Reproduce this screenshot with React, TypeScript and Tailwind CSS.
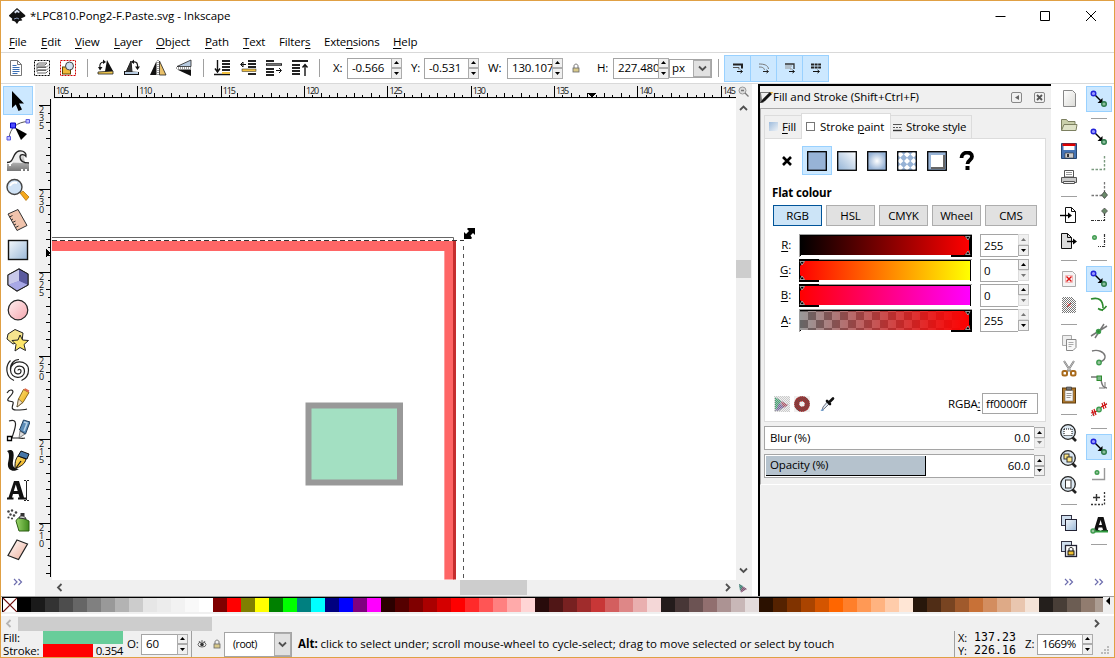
import React from "react";

type Kids = { children?: React.ReactNode };

/* ---------- small controls ---------- */

function Icon({ s = 20, v = 20, children }: Kids & { s?: number; v?: number }) {
  return (
    <svg width={s} height={s} viewBox={`0 0 ${v} ${v}`} fill="none" className="shrink-0">
      {children}
    </svg>
  );
}

function Spin({ upOff = false, downOff = false }: { upOff?: boolean; downOff?: boolean }) {
  return (
    <div className="flex h-full w-[11px] shrink-0 flex-col">
      <div className={`flex flex-1 items-center justify-center border bg-[#f0f0f0] ${upOff ? "border-[#dcdcdc]" : "border-[#acacac]"}`}>
        <svg width="5" height="3" viewBox="0 0 5 3"><path d="M0 3 2.5 0 5 3z" fill={upOff ? "#777" : "#000"} /></svg>
      </div>
      <div className={`flex flex-1 items-center justify-center border bg-[#f0f0f0] ${downOff ? "border-[#dcdcdc]" : "border-[#acacac]"}`}>
        <svg width="5" height="3" viewBox="0 0 5 3"><path d="M0 0 2.5 3 5 0z" fill={downOff ? "#777" : "#000"} /></svg>
      </div>
    </div>
  );
}

function NumBox({ value, box }: { value: string; box: string }) {
  return (
    <div className={`flex shrink-0 ${box}`}>
      <div className="flex min-w-0 flex-1 items-center overflow-hidden border border-r-0 border-[#a5a5a5] bg-white pl-[4px] whitespace-nowrap">{value}</div>
      <Spin />
    </div>
  );
}

function Chevron({ d, c = "#505050" }: { d: "l" | "r" | "u" | "d"; c?: string }) {
  const p = { l: "M5.5 1 2 4.5 5.5 8", r: "M3 1l3.5 3.5L3 8", u: "M1 6l3.500-3.500L8 6", d: "M1 2.500 4.500 6 8 2.500" }[d];
  return (
    <svg width="9" height="9" viewBox="0 0 9 9"><path d={p} stroke={c} strokeWidth="1.800" fill="none" /></svg>
  );
}

function More() {
  return (
    <svg width="10" height="8" viewBox="0 0 10 8" fill="none" stroke="#6d6dae" strokeWidth="1.200"><path d="M1 1l3 3-3 3M5.500 1l3 3-3 3" /></svg>
  );
}

const VSep = () => <div className="flex h-full w-3 shrink-0 items-center justify-center"><div className="h-[18px] w-px bg-[#a0a0a0]" /></div>;
const HSep = () => <div className="flex h-3 w-full shrink-0 items-center justify-center"><div className="h-px w-4 bg-[#a0a0a0]" /></div>;

/* ---------- shared paint ---------- */

function Defs() {
  return (
    <svg width="0" height="0" className="absolute">
      <defs>
        <linearGradient id="blue" x1="0" y1="1" x2="1" y2="0"><stop stopColor="#93b3d6" /><stop offset="1" stopColor="#fff" /></linearGradient>
        <linearGradient id="sky" x1="0" y1="0" x2="1" y2="1"><stop stopColor="#f4f8fc" /><stop offset="1" stopColor="#9ab8d8" /></linearGradient>
        <linearGradient id="mist" x1="0" y1="0" x2="1" y2="1"><stop stopColor="#9dbbdc" /><stop offset="1" stopColor="#eef2f6" /></linearGradient>
        <radialGradient id="glow"><stop stopColor="#fff" /><stop offset="1" stopColor="#97b3d6" /></radialGradient>
        <linearGradient id="pink" x1="0" y1="0" x2="1" y2="1"><stop stopColor="#fff0f0" /><stop offset="1" stopColor="#f5a6ae" /></linearGradient>
        <linearGradient id="peach" x1="0" y1="0" x2="1" y2="1"><stop stopColor="#fff" /><stop offset="1" stopColor="#efae9a" /></linearGradient>
        <linearGradient id="grey" x1="0" y1="0" x2="0" y2="1"><stop stopColor="#eee" /><stop offset="1" stopColor="#777" /></linearGradient>
        <linearGradient id="paper" x1="0" y1="0" x2="1" y2="1"><stop stopColor="#fff" /><stop offset="1" stopColor="#dcdcd8" /></linearGradient>
        <linearGradient id="gold" x1="0" y1="0" x2="1" y2="1"><stop stopColor="#ffe680" /><stop offset="1" stopColor="#e8a000" /></linearGradient>
        <linearGradient id="green" x1="0" y1="0" x2="1" y2="0"><stop stopColor="#9bd66a" /><stop offset="1" stopColor="#3f8a1c" /></linearGradient>
        <pattern id="mesh" width="2" height="2" patternUnits="userSpaceOnUse"><path d="M0 0h1v1H0zM1 1h1v1H1z" fill="#555" /></pattern>
        <pattern id="veil" width="2" height="2" patternUnits="userSpaceOnUse"><path d="M0 0h1v1H0zM1 1h1v1H1z" fill="#f0f0f0" /></pattern>
      </defs>
    </svg>
  );
}

/* ---------- tool palette on the left ---------- */

const tools: React.ReactNode[] = [
  <Icon s={24} v={24}><path d="M6 2v17l3.800-3.400L12.500 22l3.500-1.600-2.900-6H18z" fill="#000" /></Icon>,
  <Icon s={24} v={24}><path d="M3 20C4 10 11 4 22 3.500" stroke="#555" /><path d="M1 18.500h3.500V22H1zM20 1.500h3.500V5H20z" fill="#bcbcff" stroke="#5a5adf" /><path d="M4.500 5h5v5h-5z" fill="#4b4bff" stroke="#0000c8" /><path d="M9 9.500 21 16l-6 6z" fill="#000" /></Icon>,
  <Icon s={24} v={24}><path d="M1 23v-7h2v2h2v-2c3 0 3-8 6-11h8c-2 8 0 11 4 11v7h-2v-2h-2v2h-2v-2h-2v2z" fill="url(#grey)" /><path d="M1 14.500c8 0 5-10 12-11.500 5-1 8 3 7 5.500-1.500-2.500-6-2.500-6 .5 0 4 4 6 9 6" stroke="#222" strokeWidth="1.300" fill="#eee" /></Icon>,
  <Icon s={24} v={24}><path d="M14 15l3-2 6 6-3 3.500z" fill="#f5a81c" stroke="#a86800" strokeWidth=".7" /><circle cx="8.500" cy="9" r="7.500" fill="#cfe2f5" stroke="#444" strokeWidth="1.400" /><path d="M4 8c1-3 4-4 7-3" stroke="#fff" strokeWidth="2" /></Icon>,
  <Icon s={24} v={24}><path d="M2 6 12 1.500l9 16-10 5z" fill="#f0c3ac" stroke="#333" /><path d="M3.500 9l3-1.500M5 12l2-1M6.500 14.500l3-1.500M8 17l2-1M9.500 19.500l3-1.500" stroke="#333" /></Icon>,
  <Icon s={24} v={24}><rect x="2.500" y="2.500" width="19" height="19" fill="url(#sky)" stroke="#111" strokeWidth="1.400" /></Icon>,
  <Icon s={24} v={24}><path d="M2 7 13 1l9 5v11l-11 6-9-6z" fill="#8d8dcc" stroke="#222" strokeWidth="1.100" /><path d="M2 7l11-6v12L2 17z" fill="#c8c8ea" /><path d="M13 1l9 5v11l-9-4z" fill="#5b5b9e" /><path d="M2 17l11-4 9 4-11 6z" fill="#a8a8e6" /><path d="M2 7 13 1l9 5v11l-11 6-9-6z" stroke="#222" /></Icon>,
  <Icon s={24} v={24}><circle cx="12" cy="12" r="9.800" fill="url(#pink)" stroke="#222" strokeWidth="1.200" /></Icon>,
  <Icon s={24} v={24}><path d="M2 6l7-4.500L17 5l-1 8-9 3-6-5z" fill="#f6e58e" stroke="#222" /><path d="M14 7l2.500 5 6 .5-4.500 4 1.500 6-5.500-3-5 3.500 1-6.500-4-4 6-.5z" fill="#fde66a" stroke="#222" /></Icon>,
  <Icon s={24} v={24}><path d="M12 12.500c0-2 3.500-1.500 3 1-.7 3.700-6.500 3-6.500-1 0-6 10-6 10 .8 0 8.700-14 8-14-1.300C4.500 1.500 22.500 1 22.500 12c0 5-2.500 8.500-7 10.500M4.500 12C4 6 8 1.500 13 1.500" stroke="#222" strokeWidth="1.200" /><path d="M4.500 2.500C-1 8-.5 19 8 22.500" stroke="#222" strokeWidth="1.200" /></Icon>,
  <Icon s={24} v={24}><path d="M1 5c3-5 8-3 5 1s-6 6-3 7 5 0 4 3-2 6 3 6 8 0 11-1" stroke="#222" strokeWidth="1.200" /><path d="M11 19l1.500-8 5-9.500 5.500 3-6 10z" fill="url(#gold)" stroke="#6b4a00" strokeWidth=".8" /><path d="M17.500 1.500l5 3 .8-2-4-2.300z" fill="#e06a4a" /><path d="M12.500 11l4 3.500L11 19z" fill="#f6e3c5" stroke="#222" strokeWidth=".5" /></Icon>,
  <Icon s={24} v={24}><path d="M3 3c12-4 4 12 3 17h6c3 0 4 1 7 0" stroke="#222" strokeWidth="1.200" /><path d="M1.500 18.500h4v4h-4z" fill="#fff" stroke="#000" strokeWidth="1.300" /><path d="M13 20l1-7 5 3z" fill="#ddd" stroke="#333" strokeWidth=".6" /><path d="M13.500 12l4-10 6.500 2-4.500 12z" fill="#5b8cb8" stroke="#24415e" /><path d="M18 4l3 1-3 8" stroke="#b9d4ea" strokeWidth="1.500" /></Icon>,
  <Icon s={24} v={24}><path d="M1 3c8-4 7 5 6 10-1 6 2 8 6 8-6 4-12 1-11-6 1-5 2-10-1-12z" fill="#111" /><path d="M9 21c0-6 0-9 3-13l8 3c-1 5-5 7-9 9z" fill="url(#gold)" stroke="#111" /><path d="M12 8l3-5 8 3-2 5z" fill="#4676a8" stroke="#111" /><path d="M10 20l5-7" stroke="#111" strokeWidth="1.200" /></Icon>,
  <Icon s={24} v={24}><path d="M1 21.500v-2h1.500L8 3h5l5 16.500h2v2h-8v-2h1.500l-1-3.500H7l-1 3.500h1.500v2zM7.800 13h3.900L9.800 6.500z" fill="#111" /><path d="M18 2.500h2M21 2.500h2M20.500 3v19M18 22.500h2M21 22.500h2" stroke="#222" /></Icon>,
  <Icon s={24} v={24}><path d="M10 13c1-3 4-4 7-3l6 3v10H13z" fill="url(#green)" stroke="#2b5c12" /><path d="M13 10c0-3 6-3 7 1z" fill="#ccc" stroke="#333" /><path d="M14.500 5h4v3h-4z" fill="#333" /><g fill="#444"><circle cx="2.500" cy="3.500" r="1.300" /><circle cx="6" cy="2.500" r="1.200" /><circle cx="10" cy="4.500" r="1.300" /><circle cx="4.500" cy="6.500" r="1.200" /><circle cx="8" cy="7.500" r="1.300" /><circle cx="2.500" cy="9.500" r="1.100" /><circle cx="6" cy="10.500" r="1.100" /></g></Icon>,
  <Icon s={24} v={24}><path d="M11 2l10.500 4-9 15.500-10.500-4z" fill="url(#peach)" stroke="#222" strokeWidth="1.200" /></Icon>,
];

function Toolbox() {
  return (
    <div className="flex w-[34px] shrink-0 flex-col items-center bg-white pt-[2px]">
      {tools.map((t, i) => (
        <div key={i} className={`flex w-[30px] shrink-0 items-center justify-center ${i === 0 ? "h-[29px] border border-[#99d1ff] bg-[#cce8ff]" : "h-[30px]"}`}>{t}</div>
      ))}
      <div className="mt-[13px]"><More /></div>
    </div>
  );
}

/* ---------- toolbar ---------- */

const Bars = ({ y, x, w }: { y: number[]; x: number; w: number }) => (
  <>{y.map((k, i) => <rect key={i} x={x} y={k} width={w} height="2" fill="#222" />)}</>
);

const barIcons: React.ReactNode[][] = [
  [
    <Icon s={18} v={18}><path d="M3.500 1.500h7l4 4v11h-11z" fill="#fff" stroke="#777" /><path d="M10.500 1.500v4h4" stroke="#777" /><path d="M5.500 6.500h4M5.500 8.500h7M5.500 10.500h7M5.500 12.500h7M5.500 14.500h5" stroke="#3a6fb5" /></Icon>,
    <Icon s={18} v={18}><path d="M1.500 1.500h15v15h-15z" stroke="#000" strokeDasharray="2 1" /><path d="M4 5l2-1h8l-2 2H5zM4 8.500h9l2-2M4 11.500h9l2-2M4 14h9l2-2M4 5v8" stroke="#666" /><path d="M5 7h8v1H5zM5 10h8v1H5z" fill="#999" /></Icon>,
    <Icon s={18} v={18}><path d="M1.500 1.500h15v15h-15z" stroke="#d00000" strokeDasharray="2 1" /><rect x="3.500" y="8" width="8" height="7" fill="#f0b93a" stroke="#5a4300" /><circle cx="10.500" cy="7" r="4" fill="#cfe0f0" stroke="#444" /></Icon>,
  ],
  [
    <Icon s={18} v={18}><path d="M1 13l15-1v3H1z" fill="#f0c850" stroke="#222" strokeWidth=".8" /><path d="M10 1l6 11-8 .500z" fill="#111" /><path d="M3 9c-1-4 1-6 4-6" stroke="#111" strokeWidth="1.200" /><path d="M1 8h4.500L3 11.500zM6 .5 9 3 6 5z" fill="#111" /></Icon>,
    <Icon s={18} v={18}><path d="M1 12l15 1v3H1z" fill="#111" /><path d="M3 13 8 2l1 11z" fill="#333" stroke="#222" /><path d="M2 13h13v2H2z" fill="#b8cbe0" /><path d="M10 3c4-1 5 2 4.500 6" stroke="#111" strokeWidth="1.200" /><path d="M12 7.500h5L14.500 11zM11 .5 8 3l3 2z" fill="#111" /></Icon>,
    <Icon s={18} v={18}><path d="M7.500 2v14H1z" fill="#111" /><path d="M10.500 2v14H17z" fill="#e9c069" stroke="#222" strokeWidth=".8" /><path d="M9 1v16" stroke="#444" strokeDasharray="1 1" /></Icon>,
    <Icon s={18} v={18}><path d="M2 7.500 16 7.500V1z" fill="#b8cbe0" stroke="#222" strokeWidth=".8" /><path d="M2 10.500h14V17z" fill="#111" /><path d="M1 9h16" stroke="#444" strokeDasharray="1 1" /></Icon>,
  ],
  [
    <Icon s={18} v={18}><Bars y={[1, 4, 7, 10]} x={9} w={8} /><path d="M4.500 1v11M2 9.500 4.500 13 7 9.500M1 15.500h16" stroke="#111" strokeWidth="1.400" /><rect x="9" y="13" width="8" height="2" fill="#f0c040" /></Icon>,
    <Icon s={18} v={18}><Bars y={[1, 4, 7]} x={9} w={8} /><rect x="3" y="10" width="14" height="2.500" fill="#f0c040" stroke="#222" strokeWidth=".5" /><rect x="9" y="14" width="8" height="2" fill="#222" /><path d="M2 5.500h5M4 3v5L1.500 5.500z" stroke="#111" /></Icon>,
    <Icon s={18} v={18}><Bars y={[1, 9, 12, 15]} x={1} w={8} /><path d="M1 5.500h16" stroke="#222" strokeWidth="2.500" /><path d="M2 5.500h14" stroke="#aaa" strokeWidth=".6" /><path d="M11 11.500h5M14 9l2.500 2.500L14 14" stroke="#111" /></Icon>,
    <Icon s={18} v={18}><path d="M1 2h16" stroke="#222" strokeWidth="2" /><Bars y={[5, 8, 11, 14]} x={1} w={8} /><path d="M14 17V6M11.500 8.500 14 5.500l2.500 3" stroke="#111" strokeWidth="1.400" /></Icon>,
  ],
];

const affect: React.ReactNode[] = [
  <Icon s={12} v={12}><path d="M1 2.500h9v4" stroke="#222" strokeWidth="2" /><path d="M1 5.500h6v2" stroke="#555" /><path d="M5 9.500h5M8.500 8l2 1.500-2 1.500" stroke="#111" /></Icon>,
  <Icon s={12} v={12}><path d="M1 2c5 0 9 1 9.500 5M1 5c4 0 5 1 5.500 3" stroke="#777" /><path d="M5 9.500h5M8.500 8l2 1.500-2 1.500" stroke="#222" /></Icon>,
  <Icon s={12} v={12}><path d="M1 2h9v5" stroke="#333" strokeWidth="1.300" /><path d="M1 4h7M1 6h6v2" stroke="#999" /><path d="M5 9.500h5M8.500 8l2 1.500-2 1.500" stroke="#111" /></Icon>,
  <Icon s={12} v={12}><path d="M1 2.500h10M1 5.500h10" stroke="#222" strokeWidth="2" strokeDasharray="3 .6" /><path d="M3 9.500h6M7.500 8l2 1.500-2 1.500" stroke="#111" /></Icon>,
];

function Lock() {
  return <Icon s={10} v={10}><path d="M3 5V3c0-2.500 4-2.500 4 0v2" stroke="#777" /><rect x="2" y="5" width="6" height="4" fill="#d8c98a" stroke="#666" strokeWidth=".8" /></Icon>;
}

function Toolbar() {
  return (
    <div className="flex h-[31px] shrink-0 items-center border-b border-[#d9d9d9] pl-[2px]">
      {barIcons.map((g, i) => (
        <React.Fragment key={i}>
          {g.map((ic, j) => <div key={j} className="flex w-[26px] shrink-0 justify-center">{ic}</div>)}
          <VSep />
        </React.Fragment>
      ))}
      <span className="ml-[8px] w-[14px]">X:</span><NumBox value="-0.566" box="h-[21px] w-[55px]" />
      <span className="ml-[9px] w-[13px]">Y:</span><NumBox value="-0.531" box="h-[21px] w-[55px]" />
      <span className="ml-[9px] w-[19px]">W:</span><NumBox value="130.107" box="h-[21px] w-[56px]" />
      <div className="ml-[8px] w-[26px]"><Lock /></div>
      <span className="w-[16px]">H:</span><NumBox value="227.480" box="h-[21px] w-[56px]" />
      <div className="flex h-[19px] w-[43px] shrink-0 border border-[#a5a5a5] bg-white">
        <span className="flex flex-1 items-center pl-[2px]">px</span>
        <span className="flex w-[18px] items-center justify-center border border-[#acacac] bg-[#e1e1e1]"><Chevron d="d" /></span>
      </div>
      <VSep />
      <div className="flex h-[27px] shrink-0 border border-[#99d1ff]">
        {affect.map((a, i) => <div key={i} className={`flex items-center justify-center bg-[#cce8ff] ${i < 3 ? "w-[26px] border-r border-[#99d1ff]" : "w-[25px]"}`}>{a}</div>)}
      </div>
    </div>
  );
}

/* ---------- canvas ---------- */

const U = 83.35;
function HRuler() {
  const x0 = 19.5;
  return (
    <svg width="701" height="15" viewBox="0 0 701 15" shapeRendering="crispEdges">
      <rect width="701" height="15" fill="#f0f0f0" />
      <rect x="19" y="13" width="682" height="1" fill="#000" />
      {Array.from({ length: 82 }, (_, i) => {
        const x = Math.round(x0 + (i * U) / 10 - 0.5);
        const top = i % 10 === 0 ? 2 : i % 2 === 0 ? 9 : 11;
        return <rect key={i} x={x} y={top} width="1" height={13 - top} fill="#000" />;
      })}
      {Array.from({ length: 9 }, (_, i) => (
        <text key={i} x={x0 + i * U + 1.5} y="10" fontSize="9" fill="#111" textLength="13" fontFamily="'Open Sans'">{105 + i * 5}</text>
      ))}
      <path d="M553 9h8l-4 5z" fill="#000" />
    </svg>
  );
}

function VRuler() {
  return (
    <svg width="17" height="481" viewBox="0 0 17 481" shapeRendering="crispEdges" className="shrink-0">
      <rect width="17" height="481" fill="#f0f0f0" />
      <rect x="15" y="0" width="1" height="478" fill="#000" />
      {Array.from({ length: 57 }, (_, i) => {
        const y = Math.round(6 + (i * 83.55) / 10);
        return <rect key={i} x={i % 10 === 0 ? 4 : i % 2 === 0 ? 11 : 13} y={y} width={i % 10 === 0 ? 11 : i % 2 === 0 ? 4 : 2} height="1" fill="#000" />;
      })}
      {Array.from({ length: 6 }, (_, i) => {
        const y = 14 + i * 83.55;
        return <text key={i} x="4 4 4" y={`${y} ${y + 8} ${y + 16}`} fontSize="9" fill="#111" fontFamily="'Open Sans'">{235 - 5 * i}</text>;
      })}
      <path d="M11 150l5 4-5 4z" fill="#000" />
    </svg>
  );
}

function Drawing() {
  return (
    <svg width="684" height="481" viewBox="52 99 684 481" className="shrink-0 bg-white">
      <path d="M52 237.500h401.500v4" stroke="#666" fill="none" />
      <path d="M52 241h402v338.500h-9.700V251H52z" fill="#ff6666" />
      <path d="M444.500 251v328" stroke="#ff9c9c" />
      <rect x="453" y="241" width="3" height="338.500" fill="#c62e2e" />
      <path d="M52 240.500h412" stroke="#333" strokeDasharray="5 3" />
      <path d="M463.500 246v334" stroke="#555" strokeDasharray="4 4" />
      <path d="M468 228h7v7l-2-2-2.500 2.500L472 238l-1 1h-7v-7l2 2 3-3-2-2z" fill="#000" />
      <rect x="308.500" y="405.500" width="91.500" height="77" fill="#a3e0c2" stroke="#999" strokeWidth="6" />
    </svg>
  );
}

function CanvasArea() {
  return (
    <div className="flex w-[717px] shrink-0 flex-col bg-[#f0f0f0]">
      <div className="flex h-[15px] shrink-0">
        <HRuler />
        <div className="flex w-[14px] items-center justify-center"><Icon s={11} v={11}><circle cx="4.500" cy="4.500" r="3.500" fill="#ddd" stroke="#999" /><path d="M3 4.500h3M7 7l3.500 3.500" stroke="#777" strokeWidth="1.300" /></Icon></div>
      </div>
      <div className="flex h-[481px] shrink-0">
        <VRuler />
        <Drawing />
        <div className="flex w-[15px] flex-col items-center bg-[#f0f0f0]">
          <div className="mt-[5px] h-[9px]"><Chevron d="u" /></div>
          <div className="mt-[147px] h-[18px] w-[15px] bg-[#cdcdcd]" />
          <div className="mt-[288px]"><Chevron d="d" /></div>
        </div>
      </div>
      <div className="flex h-[15px] shrink-0 items-center">
        <div className="ml-[21px] w-[9px]"><Chevron d="l" /></div>
        <div className="ml-[395px] h-[15px] w-[67px] bg-[#cdcdcd]" />
        <div className="ml-[196px]"><Chevron d="r" /></div>
        <div className="ml-[6px]"><Icon s={10} v={10}><path d="M1 1l8 5-6 3.500z" fill="#a79" /><path d="M1 1l4 2-3 5z" fill="#5a9" /><path d="M1 1l8 5-6 3.500z" fill="url(#mesh)" opacity=".6" /></Icon></div>
      </div>
    </div>
  );
}

/* ---------- fill and stroke dock ---------- */

function Slider({ id, from, to, end, checks }: { id: string; from: string; to: string; end: boolean; checks?: boolean }) {
  return (
    <svg width="173" height="23" viewBox="0 0 173 23" className="shrink-0">
      <defs>
        <linearGradient id={id}><stop stopColor={from} stopOpacity={checks ? 0 : 1} /><stop offset="1" stopColor={to} /></linearGradient>
        <pattern id={id + "c"} width="16" height="16" x="1" y="3" patternUnits="userSpaceOnUse"><path d="M0 0h16v16H0z" fill="#999" /><path d="M8 0h8v8H8zM0 8h8v8H0z" fill="#666" /></pattern>
      </defs>
      <path d="M0 .5h173M.5 0v23" stroke="#a0a0a0" />
      <path d="M1 1.500h171M1.500 1v21M171.500 1v21" stroke="#000" />
      {end ? <rect x="152" y="1" width="21" height="22" fill="#000" /> : <rect x="0" y="0" width="20" height="23" fill="#000" />}
      <rect x="1" y="2" width="170" height="19" fill={checks ? `url(#${id}c)` : `url(#${id})`} />
      {checks && <rect x="1" y="2" width="170" height="19" fill={`url(#${id})`} />}
      {end ? (
        <><path d="M166 2h5l-1 4v11l1 4h-5zM170 2h3v19h-3z" fill="none" /><path d="M170 2h3v19h-3zM165 2h6v5zM165 21h6v-5z" fill="#000" /><path d="M166.500 2.500h4.500l-2 3.500zM166.500 20.500h4.500l-2-3.500z" stroke="#bbb" strokeWidth=".8" /></>
      ) : (
        <><path d="M0 2h1v19H0zM0 2h6L1 7zM0 21h6l-5-5z" fill="#000" /><path d="M1 2.500h4.500L3 6zM1 20.500h4.500L3 17z" stroke="#bbb" strokeWidth=".8" /></>
      )}
    </svg>
  );
}

function Channel({ l, v, ...s }: { l: string; v: string; id: string; from: string; to: string; end: boolean; checks?: boolean }) {
  return (
    <div className="flex h-[25px] items-start">
      <div className="w-[34px] pt-[3px] pr-[8px] text-right"><u>{l}</u>:</div>
      <Slider {...s} />
      <div className="ml-[8px] flex h-[23px] w-[49px]">
        <div className="flex flex-1 items-center border border-r-0 border-[#a5a5a5] pl-[3px]">{v}</div>
        <div className="h-[22px]"><Spin upOff={s.end} downOff={!s.end} /></div>
      </div>
    </div>
  );
}

const diamonds = [0, 1, 2].flatMap((r) => [0, 1, 2].map((c) => `M${3.4 + c * 6.6} ${0.3 + r * 6.6}l3 3.100-3 3.100-3-3.100z`)).join("");

const paints: React.ReactNode[] = [
  <path d="M6 6l8 8M14 6l-8 8" stroke="#000" strokeWidth="2.600" />,
  <rect x=".7" y=".7" width="18.600" height="18.600" fill="#97b3d6" stroke="#000" strokeWidth="1.300" />,
  <rect x=".7" y=".7" width="18.600" height="18.600" fill="url(#blue)" stroke="#000" strokeWidth="1.300" />,
  <rect x=".7" y=".7" width="18.600" height="18.600" fill="url(#glow)" stroke="#000" strokeWidth="1.300" />,
  <><rect x=".7" y=".7" width="18.600" height="18.600" fill="#97b3d6" /><path d={diamonds} fill="#fff" /><rect x=".7" y=".7" width="18.600" height="18.600" stroke="#000" strokeWidth="1.300" /></>,
  <><rect x=".7" y=".7" width="18.600" height="18.600" fill="#97b3d6" stroke="#000" strokeWidth="1.300" /><rect x="4" y="4" width="14" height="14" fill="#666" /><rect x="4" y="4" width="12" height="12" fill="#fff" /></>,
  <><path d="M4.500 7C4.500 0 15 0 15 5.500c0 4-4.500 3.500-4.500 7.500" stroke="#000" strokeWidth="3.800" /><rect x="8.500" y="15" width="4" height="4" fill="#000" /></>,
];

function Dock() {
  return (
    <div className="ml-[6px] flex w-[293px] shrink-0 flex-col border-t-2 border-l-2 border-black bg-[#f0f0f0]">
      <div className="flex h-[22px] shrink-0 items-center">
        <Icon s={13} v={13}><path d="M0 1h12l-9 11H0z" fill="#777" /><path d="M1 2h8L2 9z" fill="#eee" /><path d="M0 12l3-4 7-7 2 2-7 7z" fill="#111" /><path d="M10 1l2 2 1-2z" fill="#e8b030" /></Icon>
        <span className="flex-1 tracking-[-0.06px]">Fill and Stroke (Shift+Ctrl+F)</span>
        <div className="mr-[12px] flex h-[11px] w-[11px] items-center justify-center rounded-[2px] border border-[#888]"><svg width="4" height="5"><path d="M4 0v5L0 2.500z" fill="#666" /></svg></div>
        <div className="mr-[6px] flex h-[11px] w-[11px] items-center justify-center rounded-[2px] border border-[#888]"><svg width="7" height="7"><path d="M1 1l5 5M6 1 1 6" stroke="#555" strokeWidth="1.800" /></svg></div>
      </div>
      <div className="flex h-[377px] shrink-0 flex-col border-t border-l border-[#a8a8a8] border-b border-b-white pl-[3px]">
        <div className="mt-[4px] flex h-[25px] shrink-0 items-end">
          <div className="flex h-[23px] w-[37px] items-center border-t border-l border-[#dcdcdc] pl-[4px]">
            <Icon s={10} v={10}><rect width="9" height="9" fill="url(#mist)" /></Icon><span className="ml-[3px]"><u>F</u>ill</span>
          </div>
          <div className="z-10 mb-[-1px] flex h-[26px] w-[90px] items-center border border-b-0 border-[#dcdcdc] bg-white pl-[4px]">
            <Icon s={9} v={9}><rect x=".5" y=".5" width="8" height="8" fill="#fff" stroke="#777" /></Icon><span className="ml-[5px] tracking-[-0.05px]">Stroke <u>p</u>aint</span>
          </div>
          <div className="flex h-[23px] w-[81px] items-center border-t border-r border-[#dcdcdc] pl-[1px]">
            <Icon s={10} v={10}><path d="M1 2.500h9" stroke="#555" /><path d="M1 5.500h9" stroke="#555" strokeDasharray="2 1" /><path d="M1 8.500h9" stroke="#333" strokeWidth="1.400" /></Icon><span className="ml-[4px]">Stroke style</span>
          </div>
        </div>
        <div className="flex h-[284px] w-[282px] shrink-0 flex-col border border-[#dcdcdc] bg-white">
          <div className="mt-[7px] ml-[7px] flex h-[30px] shrink-0">
            {paints.map((p, i) => (
              <div key={i} className={`flex h-[29px] w-[30px] items-center justify-center ${i === 1 ? "border border-[#99d1ff] bg-[#cce8ff]" : ""}`}><Icon>{p}</Icon></div>
            ))}
          </div>
          <div className="mt-[7px] ml-[7px] h-[18px] leading-[19px] font-bold">Flat colour</div>
          <div className="mt-[4px] ml-[8px] flex h-[21px] shrink-0 gap-[4px] text-center leading-[20px]">
            <div className="w-[49px] border border-[#005499] bg-[#cce4f7]">RGB</div>
            {["HSL", "CMYK", "Wheel"].map((t) => <div key={t} className="w-[49px] border border-[#adadad] bg-[#e1e1e1]">{t}</div>)}
            <div className="w-[52px] border border-[#adadad] bg-[#e1e1e1]">CMS</div>
          </div>
          <div className="mt-[8px] flex flex-col">
            <Channel l="R" v="255" id="cr" from="#000" to="#f00" end />
            <Channel l="G" v="0" id="cg" from="#f00" to="#ff0" end={false} />
            <Channel l="B" v="0" id="cb" from="#f00" to="#f0f" end={false} />
            <Channel l="A" v="255" id="ca" from="#f00" to="#f00" end checks />
          </div>
          <div className="mt-[59px] ml-[9px] flex h-[21px] shrink-0 items-center">
            <div className="bg-[#f0f0f0]"><Icon s={16} v={16}><rect width="16" height="16" fill="url(#mesh)" opacity=".5" /><path d="M1 1l13 8-9 6H1z" fill="#99a" /><path d="M1 1l6 4-4 8H1z" fill="#4a9f74" /><path d="M7 5l7 4-5 3z" fill="#a56" /><path d="M2 15l3-8 5 4z" fill="#769" /><rect width="16" height="16" fill="url(#veil)" opacity=".5" /></Icon></div>
            <div className="ml-[4px] bg-[#f0f0f0]"><Icon s={16} v={16}><circle cx="8" cy="8" r="5.300" stroke="#c02020" strokeWidth="5" /><circle cx="8" cy="8" r="5.300" stroke="url(#mesh)" strokeWidth="5" /></Icon></div>
            <div className="ml-[9px]"><Icon s={16} v={16}><path d="M3 14.500 4 11l5-6 2 2-5 5z" fill="#dde8f0" stroke="#556" strokeWidth=".8" /><path d="M8 5l3 3M10 6.500l4-4" stroke="#111" strokeWidth="2.600" strokeLinecap="round" /><path d="M1.500 15l2-2.500 1.500 2z" fill="#6699cc" /></Icon></div>
            <span className="ml-[113px] w-[34px]">RGBA<u>:</u></span>
            <div className="flex h-[21px] w-[56px] items-center border border-[#a5a5a5] pl-[3px]">ff0000ff</div>
          </div>
        </div>
        <div className="mt-[4px] flex h-[24px] w-[281px] shrink-0">
          <div className="flex flex-1 items-center justify-between border border-r-0 border-[#a5a5a5] bg-white pr-[4px] pb-[1px] pl-[5px]"><span>Blur (%)</span><span>0.0</span></div>
          <div className="h-[22px] pt-[1px]"><Spin downOff /></div>
        </div>
        <div className="mt-[4px] flex h-[24px] w-[281px] shrink-0">
          <div className="flex flex-1 items-center justify-between border border-r-0 border-[#a5a5a5] bg-white pr-[4px] pl-[1px]"><span className="flex h-[20px] w-[160px] items-center border-r border-b border-black bg-[#b5c2cd] pb-[1px] pl-[4px]">Opacity (%)</span><span className="pb-[1px]">60.0</span></div>
          <div className="h-[22px] pt-[1px]"><Spin /></div>
        </div>
      </div>
    </div>
  );
}

/* ---------- command and snap bars ---------- */

const Page = () => <path d="M4.500 1.500h9l3 3v13h-12z" fill="url(#paper)" stroke="#888" />;
const Lens = ({ children }: Kids) => (
  <><path d="M13 14l4 4" stroke="#222" strokeWidth="2.600" /><circle cx="9" cy="9" r="7.300" fill="#dce8f2" stroke="#222" strokeWidth="1.300" />{children}</>
);

const cmds: (React.ReactNode | null)[] = [
  <Page />,
  <><path d="M2.500 4.500h5L9 6.500h7V15H2.500z" fill="#c9cfaa" stroke="#7c8060" /><path d="M5 9.500h13L17 15.500H2.500z" fill="#dfe3c8" stroke="#7c8060" /></>,
  <><path d="M2.500 2.500h15v15h-15z" fill="#4573b3" stroke="#24456f" /><path d="M4.500 3h11v6h-11z" fill="#fff" /><path d="M3.500 2.500h13V5h-13z" fill="#d00" /><path d="M6 12h8.500v5H6z" fill="#ccc" stroke="#333" strokeWidth=".6" /><path d="M8 13h2v3H8z" fill="#333" /></>,
  <><path d="M5.500 3.500h9V10h-9z" fill="#fff" stroke="#555" /><path d="M7 5.500h6M7 7.500h6" stroke="#999" /><path d="M2.500 10.500h15v5h-15z" fill="#ccc" stroke="#555" /><path d="M4.500 14.500h11v2h-11z" fill="#eee" stroke="#555" /></>,
  null,
  <><path d="M6.500 2.500h6l4 4v11h-10z" fill="#fff" stroke="#111" /><path d="M12.500 2.500v4h4" stroke="#111" /><path d="M1 10.500h9" stroke="#000" strokeWidth="1.400" /><path d="M9 7.500l4 3-4 3z" fill="#000" /></>,
  <><path d="M2.500 2.500h6l4 4v11h-10z" fill="#ddd" stroke="#111" /><path d="M8.500 2.500v4h4" stroke="#111" /><path d="M8 10.500h7" stroke="#000" strokeWidth="1.400" /><path d="M14 7.500l4 3-4 3z" fill="#000" /></>,
  null,
  <><path d="M3.500 2.500h10l3 3v12h-13z" fill="#f4f4f4" stroke="#aaa" /><path d="M6.500 6.500h7v7h-7z" stroke="#f3baba" /><path d="M7.500 7.500l5 5M12.500 7.500l-5 5" stroke="#e01010" strokeWidth="1.400" /></>,
  <><path d="M3 2h10l4 4v12H3z" fill="url(#mesh)" opacity=".8" /><path d="M8 12l4-4M8 8l4 4" stroke="#c55" strokeWidth="1" /></>,
  null,
  <><path d="M3.500 2.500h9v10h-9z" fill="#eee" stroke="#aaa" /><path d="M7.500 6.500h9.500v8l-3 3H7.500z" fill="#f8f8f8" stroke="#888" /><path d="M9.500 9.500h5M9.500 11.500h5M9.500 13.500h3" stroke="#aaa" /></>,
  <><path d="M5 2l7 11M15 2 8 13" stroke="#777" strokeWidth="2" /><path d="M5 2l7 11M15 2 8 13" stroke="#ddd" strokeWidth=".7" /><rect x="3.500" y="12" width="4.500" height="4.500" rx="1.500" stroke="#a86a1c" strokeWidth="2" /><rect x="12" y="12" width="4.500" height="4.500" rx="1.500" stroke="#a86a1c" strokeWidth="2" /></>,
  <><rect x="3.500" y="3" width="13" height="15" fill="#b07728" stroke="#5f3d0e" /><rect x="6" y="5.500" width="8" height="10.500" fill="#fafafa" stroke="#777" strokeWidth=".6" /><path d="M7.500 2h5v3h-5z" fill="#777" stroke="#333" strokeWidth=".6" /><path d="M7.500 8.500h5M7.500 10.500h5M7.500 12.500h4" stroke="#999" /></>,
  null,
  <Lens><rect x="5" y="6" width="8" height="6.500" stroke="#000" strokeDasharray="1 1" fill="#fff" /></Lens>,
  <Lens><rect x="5" y="5" width="5" height="5" fill="#ffe680" stroke="#333" /><rect x="8" y="8" width="5" height="5" fill="#ffe680" stroke="#333" /></Lens>,
  <Lens><rect x="6.500" y="5" width="5.500" height="8" fill="#fff" stroke="#333" /></Lens>,
  null,
  <><rect x="2.500" y="2.500" width="10" height="10" fill="#cfdeee" stroke="#334" /><rect x="6.500" y="6.500" width="11" height="11" fill="url(#sky)" stroke="#223" /></>,
  <><rect x="2.500" y="2.500" width="10" height="10" fill="#cfdeee" stroke="#334" /><rect x="6.500" y="6.500" width="11" height="11" fill="#fff" stroke="#223" strokeWidth="1.300" /><rect x="9" y="12" width="6" height="4" fill="#f0c030" stroke="#111" /><path d="M10 12v-2c0-2 4-2 4 0v2" stroke="#111" /></>,
];

const Dot = ({ x, y, r = 2, c = "#3f9c4f", f = "#9ac49f" }: { x: number; y: number; r?: number; c?: string; f?: string }) => <circle cx={x} cy={y} r={r} fill={f} stroke={c} strokeWidth="1.400" />;
const Link = () => <><path d="M5 5l8 8" stroke="#000" strokeWidth="1.500" /><path d="M13.500 9v5h-5z" fill="#000" /><Dot x={4.500} y={4.500} r={2.300} c="#2323d8" f="#9a9aff" /><Dot x={15} y={15} r={2.300} c="#2c7a4a" f="#8bbf9c" /></>;

const snaps: (React.ReactNode | null)[] = [
  <Link />,
  null,
  <Link />,
  <path d="M15.500 3v13.500H1" stroke="#7c9b80" strokeWidth="1.400" strokeDasharray="2.500 1.500" />,
  <><path d="M15.500 3v13.500H1" stroke="#777" strokeWidth="1.300" strokeDasharray="2.500 1.500" /><path d="M15.500 12.500l3 3.500-3 3.500-3-3.500z" fill="#6a8a6a" stroke="#333" strokeWidth=".7" /></>,
  <><path d="M15.500 8v7.500H1" stroke="#333" strokeDasharray="3 1 1 1" strokeWidth="1.200" /><path d="M15.500 3l3 3-3 3-3-3z" fill="#6a8a6a" stroke="#444" strokeWidth=".7" /></>,
  <><path d="M15.500 3v12.500H9" stroke="#333" strokeDasharray="3 1 1 1" strokeWidth="1.200" /><Dot x={5.500} y={6.500} r={1.800} /></>,
  null,
  <Link />,
  <><path d="M2 4c8-2 12 1 12 9" stroke="#2d8a2d" strokeWidth="1.600" /><path d="M9 13.500c3 3 6 1 8.500-2.500M9 13.500l5 2" stroke="#2d8a2d" strokeWidth="1.500" /></>,
  <><path d="M2 15 18 5M6 17 15 3" stroke="#777" strokeWidth="1.500" /><Dot x={9.500} y={10.500} r={2} f="#2d8a2d" /></>,
  <><path d="M3 4c6-2 12 1 13 5 .5 3-2 5-5 6" stroke="#777" strokeWidth="1.400" /><Dot x={10} y={15.500} r={2.200} /></>,
  <><path d="M2 4h7M12 7c1 5 2 8 6 8" stroke="#777" strokeWidth="1.400" /><rect x="8" y="3" width="4.500" height="4.500" fill="#7db88a" stroke="#2d8a2d" /><path d="M10 15h6V9" stroke="#777" /></>,
  <><path d="M2 17 18 4" stroke="#888" /><path d="M3 11l2 6M5 10l2 6M13 4l2 6M15 3l2 6M2 14l6-2M12 8l6-3" stroke="#d01414" strokeWidth="1.200" /><Dot x={10} y={10.500} r={2.200} /></>,
  null,
  <Link />,
  <><path d="M15.500 5v11.500H3" stroke="#999" strokeWidth="1.400" /><Dot x={8} y={9.500} r={1.800} /></>,
  <><path d="M7.500 5v7M4 8.500h7" stroke="#333" strokeWidth="1.400" /><path d="M2 15.500h12M15.500 3v14" stroke="#333" strokeDasharray="2 1.500" strokeWidth="1.300" /></>,
  <><path d="M4 17v-2h1L9 2h5.500L18 15h1v2h-6.500v-2H14l-.7-2.500H9.500L9 15h1.500v2zM10 10h3L11.700 5z" fill="#111" /><path d="M4 16.500h15" stroke="#2f9c3f" strokeWidth="2" /><Dot x={4} y={16} r={2} /></>,
  null,
];

function SideBars() {
  return (
    <div className="ml-[2px] flex flex-1 bg-white">
      <div className="flex w-[31px] shrink-0 flex-col items-center pt-[2px]">
        {cmds.map((c, i) => c ? <div key={i} className="flex h-[26px] shrink-0 items-center"><Icon>{c}</Icon></div> : <HSep key={i} />)}
        <div className="mt-[16px]"><More /></div>
      </div>
      <div className="flex w-[29px] shrink-0 flex-col items-center pt-[2px]">
        {snaps.map((c, i) => c ? <div key={i} className={`flex h-[26px] w-[26px] shrink-0 items-center justify-center ${[0, 8, 15].includes(i) ? "border border-[#99d1ff] bg-[#cce8ff]" : ""}`}><Icon>{c}</Icon></div> : <HSep key={i} />)}
        <div className="mt-[28px]"><More /></div>
      </div>
    </div>
  );
}

/* ---------- bottom ---------- */

const swatches = (
  "000000 1a1a1a 333333 4d4d4d 666666 808080 999999 b3b3b3 cccccc e6e6e6 ececec f2f2f2 f9f9f9 ffffff " +
  "800000 ff0000 808000 ffff00 008000 00ff00 008080 00ffff 000080 0000ff 800080 ff00ff " +
  "2b0000 550000 800000 aa0000 d40000 ff0000 ff2a2a ff5555 ff8080 ffaaaa ffd5d5 " +
  "280b0b 501616 782121 a02c2c c83737 d35f5f de8787 e9afaf f4d7d7 241c1c 483737 6c5353 916f6f ac9393 c8b7b7 e3dbdb " +
  "2b1100 552200 803300 aa4400 d45500 ff6600 ff7f2a ff9955 ffb380 ffccaa ffe6d5 " +
  "28170b 502d16 784421 a05a2c c87137 d38d5f deaa87 e9c6af f4e3d7 241f1c 483e37 6c5d53 917c6f ac9d93"
).split(" ");

function Palette() {
  return (
    <div className="flex h-[20px] shrink-0 border-t border-[#a0a0a0] border-b-2 border-b-white bg-[#f0f0f0] pl-px">
      <div className="flex h-[15px] w-[1101px] shrink-0 overflow-hidden border-t border-black">
        <svg width="15" height="14" viewBox="0 0 15 14" className="shrink-0"><path d="M.5 0v14" stroke="#000" /><path d="M1 0h14v14H1z" fill="#fff" /><path d="M1 0l14 14M15 0 1 14" stroke="#701010" strokeWidth="1.200" /></svg>
        {swatches.map((s, i) => <div key={i} className="h-[14px] w-[14px] shrink-0" style={{ backgroundColor: "#" + s }} />)}
      </div>
      <svg width="10" height="9" viewBox="0 0 10 9"><path d="M7 0v8L3 4z" fill="#000" /></svg>
    </div>
  );
}

function Status() {
  return (
    <div className="flex h-[26px] shrink-0 items-center bg-[#f0f0f0] whitespace-nowrap">
      <div className="flex h-[26px] w-[42px] flex-col pl-[2px] leading-[13px]"><span>Fill:</span><span>Stroke:</span></div>
      <div className="flex h-[26px] w-[80px] flex-col">
        <div className="h-[13px] bg-[#68cd9a]" />
        <div className="flex h-[13px]"><div className="w-[50px] bg-[#ff0000]" /><span className="pl-[3px] leading-[14px] tracking-[-0.4px]">0.354</span></div>
      </div>
      <span className="ml-[4px] w-[14px]">O:</span>
      <NumBox value="60" box="h-[21px] w-[47px]" />
      <div className="ml-[3px] h-[26px] w-px bg-[#a0a0a0]" />
      <div className="ml-[5px]"><Icon s={10} v={10}><ellipse cx="5" cy="5.500" rx="4" ry="2.500" stroke="#666" /><circle cx="5" cy="5.500" r="1.800" fill="#333" /><path d="M2 2l1 1.500M5 1v1.500M8 2 7 3.500" stroke="#666" /></Icon></div>
      <div className="ml-[5px]"><Lock /></div>
      <div className="ml-[2px] flex h-[25px] w-[68px] border border-[#a5a5a5] bg-white">
        <span className="flex flex-1 items-center pl-[8px] text-[10.5px] tracking-[-0.5px]">(root)</span>
        <span className="flex w-[17px] items-center justify-center border border-[#acacac] bg-[#e1e1e1]"><Chevron d="d" /></span>
      </div>
      <span className="ml-[6px] w-[656px] tracking-[-0.02px]"><b>Alt:</b> click to select under; scroll mouse-wheel to cycle-select; drag to move selected or select by touch</span>
      <div className="h-[26px] w-px bg-[#a0a0a0]" />
      <div className="flex w-[19px] flex-col pl-[3px] text-[11px] leading-[13px]"><span>X:</span><span>Y:</span></div>
      <div className="flex w-[51px] flex-col font-['DejaVu_Sans_Mono'] text-[11.5px] leading-[13px] tracking-[0.1px]"><span>137.23</span><span>226.16</span></div>
      <span className="w-[12px]">Z:</span>
      <NumBox value="1669%" box="h-[21px] w-[56px] tracking-[-0.4px]" />
      <svg width="10" height="10" viewBox="0 0 10 10" className="mt-[12px] ml-[8px]" fill="#bbb"><path d="M0 7h2v2H0zM3 7h2v2H3zM6 7h2v2H6zM3 4h2v2H3zM6 4h2v2H6zM6 1h2v2H6z" /></svg>
    </div>
  );
}

/* ---------- window ---------- */

export default function App() {
  return (
    <div className="flex h-[658px] w-[1115px] flex-col overflow-hidden border border-[#e0a044] bg-white font-['Open_Sans','Noto_Sans',sans-serif] text-[11.5px] leading-[16px] tracking-[-0.15px] text-black [&_u]:underline-offset-2">
      <Defs />
      <div className="flex h-[31px] shrink-0 items-center pb-[1px]">
        <div className="ml-[7px]"><Icon s={18} v={18}><path d="M9 1l8 7c1 1 0 2-2 2.500l-2 1c0 1 2 1 1 2l-3 .5-2 3-2-2.500-3-1c-1-1 1-1 0-2L1.500 9.500C.5 9 1 8 2 7.500z" fill="#111" /><path d="M9 2.500l3 2.500-1.500 1L9 5 7.500 6.500 6 5z" fill="#d8e0f0" /><path d="M6 12l3-1 2 1" stroke="#8899bb" /></Icon></div>
        <span className="ml-[4px] flex-1 tracking-[-0.05px]">*LPC810.Pong2-F.Paste.svg - Inkscape</span>
        <svg width="110" height="12" viewBox="0 0 110 12" fill="none" stroke="#000" className="mr-[9px]"><path d="M.5 6.500h10M45.500 1.500h9v9h-9zM91 1l10 10M101 1 91 11" /></svg>
      </div>
      <div className="flex h-[21px] shrink-0 items-center border-b border-[#d9d9d9] pl-[8px]">
        <span className="w-[32px]"><u>F</u>ile</span><span className="w-[34px]"><u>E</u>dit</span><span className="w-[39px]"><u>V</u>iew</span>
        <span className="w-[42px]"><u>L</u>ayer</span><span className="w-[49px]"><u>O</u>bject</span><span className="w-[38px]"><u>P</u>ath</span>
        <span className="w-[36px]"><u>T</u>ext</span><span className="w-[45px]">Filter<u>s</u></span><span className="w-[69px] tracking-[-0.25px]">Exte<u>n</u>sions</span><span><u>H</u>elp</span>
      </div>
      <Toolbar />
      <div className="flex h-[512px] shrink-0">
        <Toolbox />
        <CanvasArea />
        <Dock />
        <SideBars />
      </div>
      <Palette />
      <div className="flex h-[15px] shrink-0 items-center bg-[#f0f0f0]">
        <div className="ml-[4px] w-[13px]"><Chevron d="l" c="#b5b5b5" /></div>
        <div className="h-[14px] w-[194px] bg-[#cdcdcd]" />
        <div className="ml-[880px]"><Chevron d="r" /></div>
      </div>
      <Status />
    </div>
  );
}
